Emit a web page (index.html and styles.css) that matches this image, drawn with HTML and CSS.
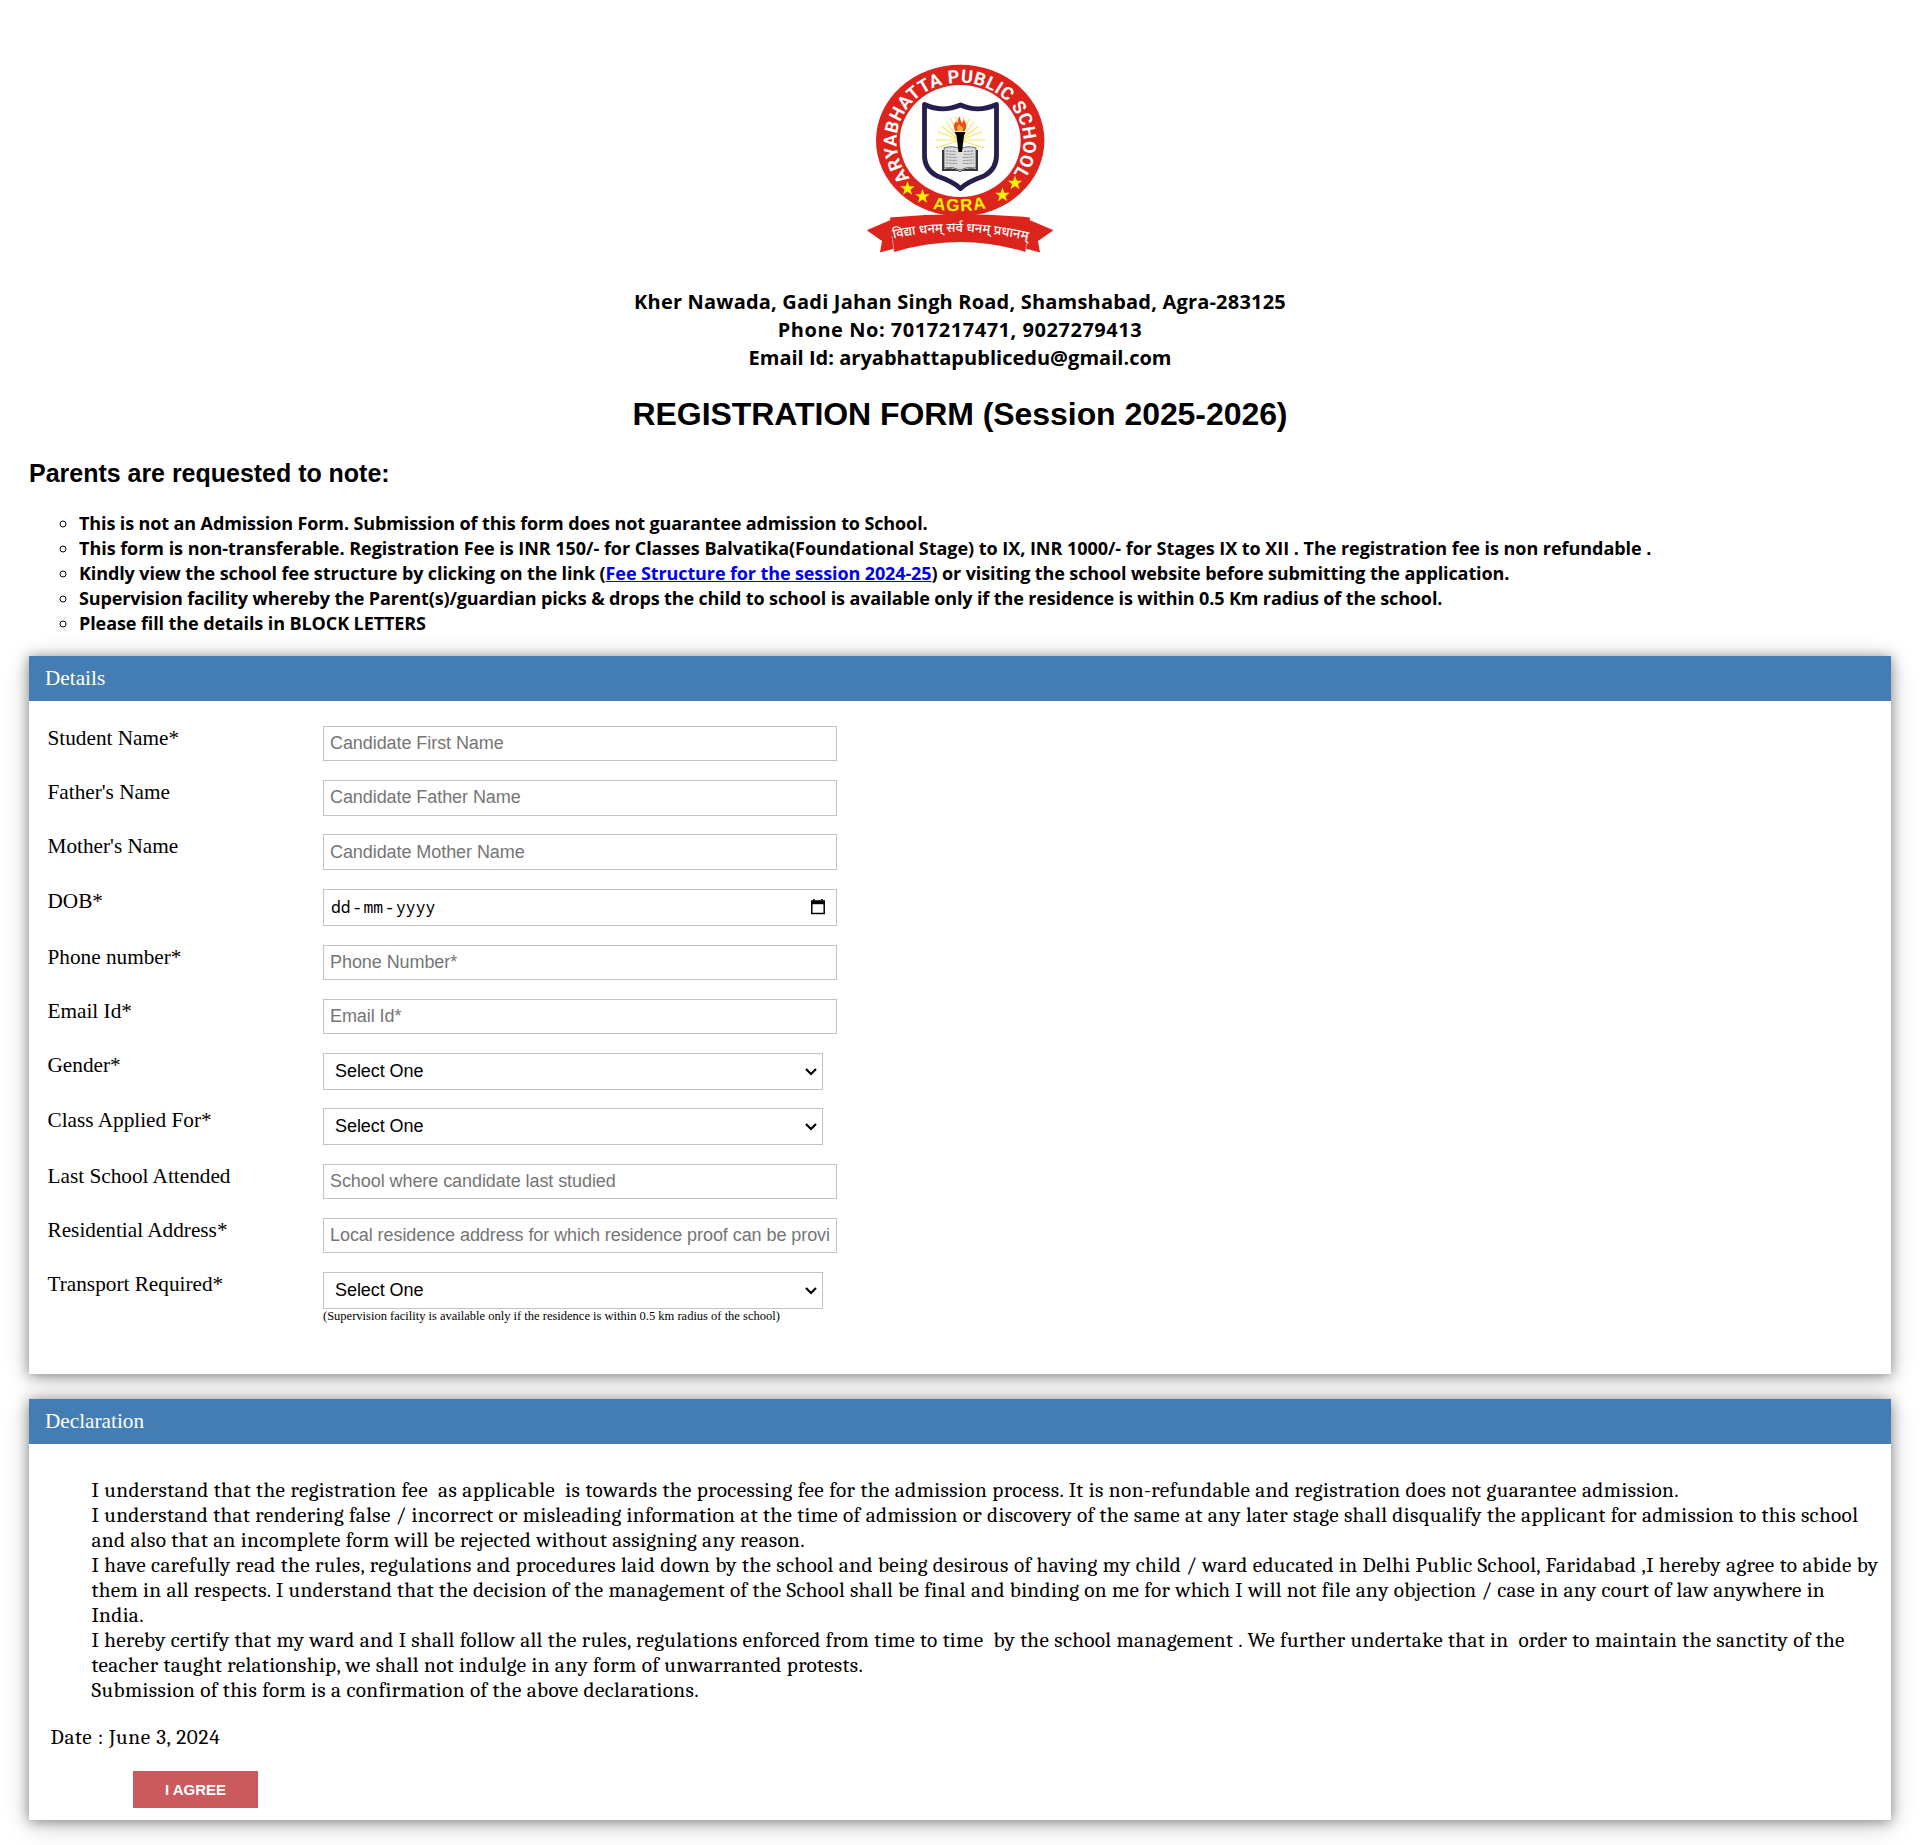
FILE: index.html
```html
<!DOCTYPE html>
<html lang="en">
<head>
<meta charset="utf-8">
<title>Registration Form</title>
<link rel="stylesheet" href="styles.css">
</head>
<body>
<header class="masthead">
  <svg class="crest" viewBox="0 0 220 220" role="img" aria-label="Aryabhatta Public School, Agra">
    <defs>
      <path id="ring" d="M60 128A63.5 59 0 1 1 160 128"/>
      <path id="city" d="M78 158Q110 164.500 142 157"/>
      <path id="motto" d="M41 189Q110 174 180 191"/>
      <path id="star" d="M0-7.5 1.9-2.3 7.3-2.3 3 1 4.5 6.2 0 3-4.5 6.2-3 1-7.3-2.3-1.9-2.3Z"/>
    </defs>
    <ellipse class="red" cx="110.2" cy="90.5" rx="84.2" ry="75.7"/>
    <ellipse class="white" cx="110.2" cy="91" rx="60.5" ry="56"/>
    <text class="ring-text"><textPath href="#ring" textLength="266" lengthAdjust="spacing">ARYABHATTA PUBLIC SCHOOL</textPath></text>
    <text class="city-text"><textPath href="#city" startOffset="50%" text-anchor="middle">AGRA</textPath></text>
    <g class="yellow">
      <use href="#star" x="57.5" y="138.5"/><use href="#star" x="72.5" y="146.5"/>
      <use href="#star" x="152.5" y="145"/><use href="#star" x="165" y="133"/>
    </g>
    <path class="shield" d="M74.500 54.500Q92 63 110.500 55Q128 63 146.500 54.500V104Q147 119 134 126Q117 132 110.500 138.500Q104 132 87 126Q74 119 74.500 104Z"/>
    <g class="rays">
      <path d="M110 90 86 98M110 90 86 90M110 90 88 82M110 90 91 76M110 90 96 72M110 90 101 69M110 90 106 67M110 90 114 67M110 90 119 69M110 90 124 72M110 90 129 76M110 90 132 82M110 90 135 90M110 90 134 98"/>
    </g>
    <path class="book-edge" d="M92 100H94V119Q103 117 110 121Q117 117 126 119V100H128V121H112L110 122 108 121H92Z"/>
    <path class="page" d="M94 98Q103 95 110 99Q117 95 126 98V118Q117 116 110 120Q103 116 94 118Z"/>
    <path class="lines" d="M96 101 106 101.500M96 104 106 104.500M96 107 107 107.500M96 110 107 110.500M96 113 107 113.500M114 101.500 124 101M114 104.500 124 104M113 107.500 124 107M113 110.500 124 110M113 113.500 124 113"/>
    <path d="M104.500 82H115.500L114 85.500 112 102H108.500L106.500 85.500Z"/>
    <path class="flame" d="M105.500 81Q102 76 106 71Q106 74 108 72Q107 69 110 66.500Q110 71 112 73Q114 71 113.500 69Q118 75 115 81Z"/>
    <path class="flame-core" d="M108 81Q106 77 109 74Q110 77 112 76.500Q114 79 112.500 81Z"/>
    <path class="red" d="M16.700 180.300 44 168.500 50 197 30 202.500 32 191ZM203.500 180.300 176 168.500 170 197 190 202.500 188 191Z"/>
    <path class="ribbon" d="M40 167.500Q110 161 180 167.500L175.500 202Q110 182 44 202Z"/>
    <path class="fold" d="M42 186 44 201M177.500 186 175.500 201"/>
    <text class="motto-text"><textPath href="#motto" startOffset="50%" text-anchor="middle">विद्या धनम् सर्व धनम् प्रधानम्</textPath></text>
  </svg>
  <address class="contact">
    <span class="c1">Kher Nawada, Gadi Jahan Singh Road, Shamshabad, Agra-283125</span>
    <span class="c2">Phone No: 7017217471, 9027279413</span>
    <span class="c3">Email Id: aryabhattapublicedu@gmail.com</span>
  </address>
  <h1 class="title">REGISTRATION FORM (Session 2025-2026)</h1>
</header>
<main class="content">
  <h2 class="subtitle">Parents are requested to note:</h2>
  <ul class="notes">
    <li class="n1">This is not an Admission Form. Submission of this form does not guarantee admission to School.</li>
    <li class="n2">This form is non-transferable. Registration Fee is INR 150/- for Classes Balvatika(Foundational Stage) to IX, INR 1000/- for Stages IX to XII . The registration fee is non refundable .</li>
    <li class="n3">Kindly view the school fee structure by clicking on the link (<a href="#">Fee Structure for the session 2024-25</a>) or visiting the school website before submitting the application.</li>
    <li class="n4">Supervision facility whereby the Parent(s)/guardian picks &amp; drops the child to school is available only if the residence is within 0.5 Km radius of the school.</li>
    <li class="n5">Please fill the details in BLOCK LETTERS</li>
  </ul>
  <section class="card details">
    <h3 class="card-head">Details</h3>
    <form class="fields">
      <label>Student Name*</label><input class="box" placeholder="Candidate First Name">
      <label>Father's Name</label><input class="box tall raised" placeholder="Candidate Father Name">
      <label>Mother's Name</label><input class="box tall" placeholder="Candidate Mother Name">
      <label>DOB*</label>
      <div class="box date"><span>dd</span><span>-</span><span>mm</span><span>-</span><span>yyyy</span>
        <svg class="calendar" viewBox="0 0 14 16"><path d="M3 0V2M11 0V2" stroke="#000" stroke-width="1.6"/><path d="M.8 2.300H13.200V14.500H.8Z" fill="none" stroke="#000" stroke-width="1.500"/><path d="M0 1.500H14V5.200H0Z"/></svg>
      </div>
      <label>Phone number*</label><input class="box" placeholder="Phone Number*">
      <label>Email Id*</label><input class="box" placeholder="Email Id*">
      <label>Gender*</label><div class="box select">Select One<svg class="chevron" viewBox="0 0 12 8"><path d="M1 1 6 6 11 1"/></svg></div>
      <label>Class Applied For*</label><div class="box select lowered">Select One<svg class="chevron" viewBox="0 0 12 8"><path d="M1 1 6 6 11 1"/></svg></div>
      <label>Last School Attended</label><input class="box" placeholder="School where candidate last studied">
      <label>Residential Address*</label><input class="box" placeholder="Local residence address for which residence proof can be provided">
      <label>Transport Required*</label>
      <div><div class="box select">Select One<svg class="chevron" viewBox="0 0 12 8"><path d="M1 1 6 6 11 1"/></svg></div>
      <p class="hint">(Supervision facility is available only if the residence is within 0.5 km radius of the school)</p></div>
    </form>
  </section>
  <section class="card declaration">
    <h3 class="card-head">Declaration</h3>
    <div class="terms">
      <p class="t1">I understand that the registration fee &nbsp;as applicable &nbsp;is towards the processing fee for the admission process. It is non-refundable and registration does not guarantee admission.</p>
      <p class="t2">I understand that rendering false / incorrect or misleading information at the time of admission or discovery of the same at any later stage shall disqualify the applicant for admission to this school<br>and also that an incomplete form will be rejected without assigning any reason.</p>
      <p class="t3">I have carefully read the rules, regulations and procedures laid down by the school and being desirous of having my child / ward educated in Delhi Public School, Faridabad ,I hereby agree to abide by<br><span class="t4">them in all respects. I understand that the decision of the management of the School shall be final and binding on me for which I will not file any objection / case in any court of law anywhere in<br>India.</span></p>
      <p class="t5">I hereby certify that my ward and I shall follow all the rules, regulations enforced from time to time &nbsp;by the school management . We further undertake that in &nbsp;order to maintain the sanctity of the<br>teacher taught relationship, we shall not indulge in any form of unwarranted protests.</p>
      <p class="t6">Submission of this form is a confirmation of the above declarations.</p>
    </div>
    <p class="date-line">Date : June 3, 2024</p>
    <button class="agree" type="button">I AGREE</button>
  </section>
</main>
</body>
</html>
```
FILE: styles.css
```css
* { box-sizing: border-box; }
body {
  margin: 0;
  padding: 50px 29px 25px;
  background: #fff;
  color: #000;
  font-family: "Liberation Serif", "Times New Roman", serif;
  font-size: 21.25px;
}
p, h1, h2, h3, ul { margin: 0; padding: 0; }

.masthead { display: flex; flex-direction: column; align-items: center; text-align: center; }
.crest { display: block; width: 220px; height: 220px; }
.red { fill: #dc241c; }
.white { fill: #fff; }
.yellow { fill: #fff200; }
.ring-text { font: bold 18px Roboto, sans-serif; fill: #fff; }
.city-text { font: bold 17px "Liberation Sans", Arial, sans-serif; letter-spacing: 1.2px; fill: #fff200; }
.motto-text { font: 500 13px "Noto Sans", sans-serif; fill: #fff; }
.shield { fill: #fff; stroke: #241f4d; stroke-width: 4.8; stroke-linejoin: round; }
.rays { stroke: #f6e35a; stroke-width: 1.1; }
.book-edge { fill: #3a3230; }
.page { fill: #dcdcdc; stroke: #444; stroke-width: .8; }
.lines { stroke: #777; stroke-width: .8; stroke-dasharray: 2.500 .7; }
.flame { fill: #e8501e; }
.flame-core { fill: #fbb03b; }
.ribbon { fill: #dc241c; }
.fold { fill: none; stroke: #f3b5b1; stroke-width: .7; }

.contact {
  display: flex;
  flex-direction: column;
  margin-top: 18px;
  font: bold 20px/28px "Open Sans", "Noto Sans", sans-serif;
}
.c1 { letter-spacing: .196px; }
.c2 { letter-spacing: .535px; }
.c3 { letter-spacing: .021px; }
.title {
  margin-top: 24px;
  font: bold 32px/36px "Liberation Sans", Arial, sans-serif;
  letter-spacing: -.065px;
}
.subtitle {
  margin-top: 27px;
  font: bold 25px/28px "Liberation Sans", Arial, sans-serif;
  letter-spacing: -.02px;
}
.notes {
  margin: 24px 0 20px;
  padding-left: 50px;
  list-style: circle;
  font: bold 18px/25px "Open Sans", "Noto Sans", sans-serif;
  white-space: nowrap;
}
.n1 { letter-spacing: -.115px; }
.n2 { letter-spacing: -.037px; }
.n3 { letter-spacing: -.112px; }
.n4 { letter-spacing: -.126px; }
.n5 { letter-spacing: -.093px; }
.notes a { color: #00e; }

.card {
  background: #fff;
  box-shadow: 0 1px 12px rgba(0, 0, 0, .4), 0 5px 25px rgba(0, 0, 0, .2);
}
.card-head {
  padding-left: 16px;
  background: #447db4;
  color: #fff;
  font-size: 21.25px;
  font-weight: normal;
  line-height: 45px;
}
.details { height: 718px; }
.fields {
  display: grid;
  grid-template-columns: 275.5px 514px;
  grid-template-rows: 54px 54px 55px 56px 54px 54px 55px 56px 54px 54px auto;
  align-items: start;
  padding: 25px 18px 0 18.5px;
}
.fields label { line-height: 25px; }
.box {
  width: 514px;
  height: 35px;
  padding: 0 6px;
  border: 1px solid #c3c3c3;
  background: #fff;
  color: #000;
  font: 18px/33px "Liberation Sans", Arial, sans-serif;
  letter-spacing: -.07px;
}
.box::placeholder { color: #757575; opacity: 1; }
.tall { height: 36px; }
.raised { padding-bottom: 2px; }
.date, .select { display: flex; align-items: center; height: 37px; }
.date {
  gap: 1.5px;
  padding: 0 11px 2px 7px;
  font: 16.4px "Noto Sans Mono", "Liberation Mono", monospace;
  letter-spacing: 0;
}
.calendar { width: 14px; height: 16px; margin-left: auto; }
.select { justify-content: space-between; width: 500px; padding: 0 5px 0 11px; }
.lowered { line-height: 35px; }
.chevron { width: 12px; height: 8px; }
.chevron path { fill: none; stroke: #000; stroke-width: 2.200; }
.hint { font-size: 12.500px; line-height: 15px; white-space: nowrap; }

.declaration {
  display: flex;
  flex-direction: column;
  align-items: flex-start;
  height: 421px;
  margin-top: 25px;
  font: 21.25px/25px Cambria, Caladea, "Liberation Serif", serif;
}
.declaration .card-head { width: 100%; font-family: "Liberation Serif", "Times New Roman", serif; }
.terms { padding: 34px 0 0 62.5px; white-space: nowrap; }
.t1 { letter-spacing: .403px; }
.t2 { letter-spacing: .356px; }
.t3 { letter-spacing: .388px; }
.t4 { letter-spacing: .318px; }
.t5 { letter-spacing: .34px; }
.t6 { letter-spacing: .366px; }
.date-line { margin: 22px 0 0 21.5px; letter-spacing: .63px; }
.agree {
  width: 125px;
  height: 37px;
  margin: 21px 0 0 104px;
  border: 0;
  background: #ca5a5e;
  color: #fff;
  font: bold 15px "Liberation Sans", Arial, sans-serif;
}
```
